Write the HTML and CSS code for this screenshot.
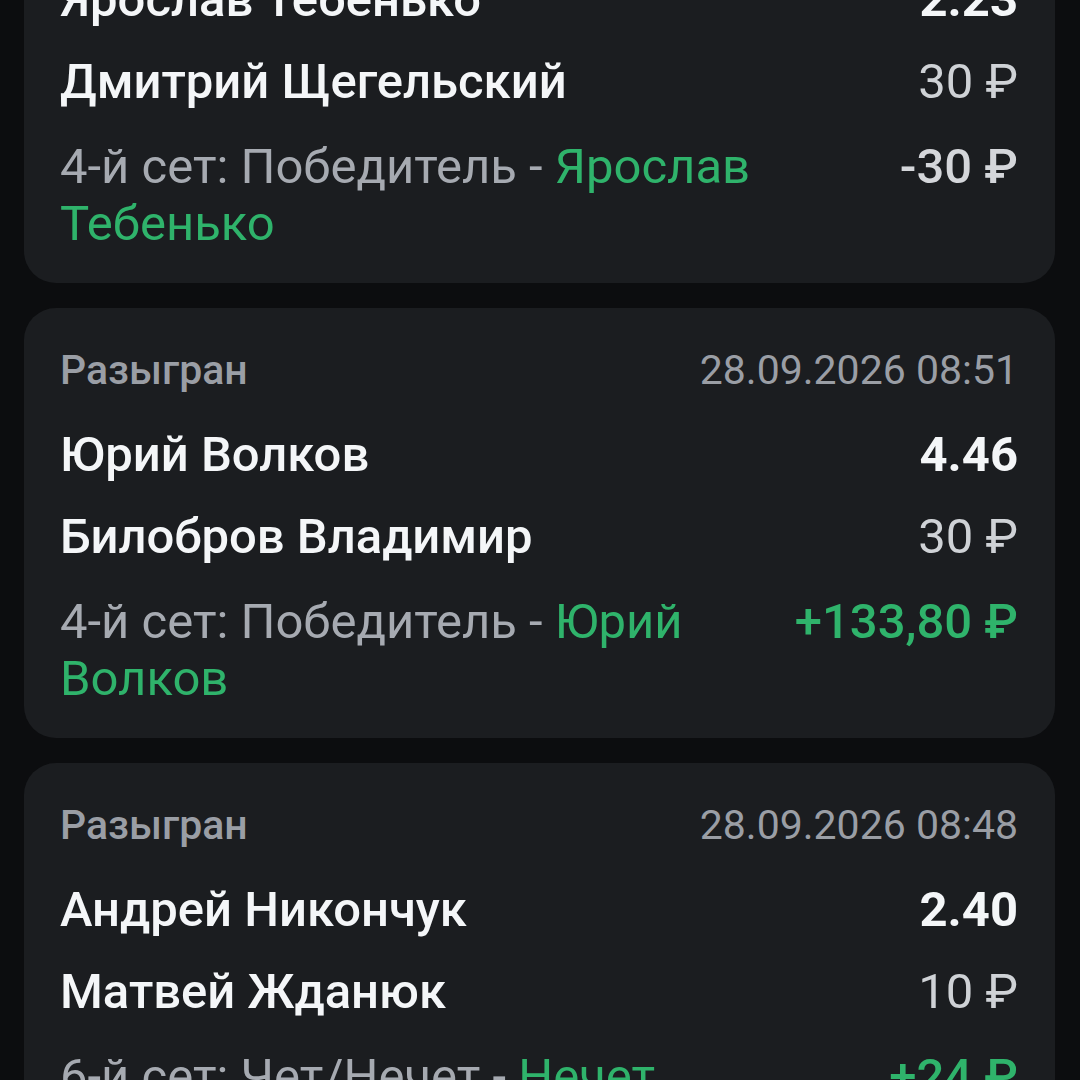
FILE: index.html
```html
<!DOCTYPE html>
<html lang="ru">
<head>
    <meta charset="UTF-8">
    <meta name="viewport" content="width=device-width, initial-scale=1.0">
    <title>История ставок</title>
    <link rel="stylesheet" href="styles.css">
</head>
<body>

<div class="feed">

    <!-- Bet card -->
    <div class="card">
        <div class="row head">
            <span class="status">Разыгран</span>
            <span class="date">28.09.2026 08:55</span>
        </div>
        <div class="row player">
            <span>Ярослав Тебенько</span>
            <span class="odds">2.23</span>
        </div>
        <div class="row player stake">
            <span>Дмитрий Щегельский</span>
            <span class="amount">30 ₽</span>
        </div>
        <div class="row bet">
            <span class="desc">4-й сет: Победитель - <span class="pick">Ярослав Тебенько</span></span>
            <span class="result">-30 ₽</span>
        </div>
    </div>

    <div class="card">
        <div class="row head">
            <span class="status">Разыгран</span>
            <span class="date">28.09.2026 08:51</span>
        </div>
        <div class="row player">
            <span>Юрий Волков</span>
            <span class="odds">4.46</span>
        </div>
        <div class="row player stake">
            <span>Билобров Владимир</span>
            <span class="amount">30 ₽</span>
        </div>
        <div class="row bet">
            <span class="desc">4-й сет: Победитель - <span class="pick">Юрий Волков</span></span>
            <span class="result win">+133,80 ₽</span>
        </div>
    </div>

    <div class="card">
        <div class="row head">
            <span class="status">Разыгран</span>
            <span class="date">28.09.2026 08:48</span>
        </div>
        <div class="row player">
            <span>Андрей Никончук</span>
            <span class="odds">2.40</span>
        </div>
        <div class="row player stake">
            <span>Матвей Жданюк</span>
            <span class="amount">10 ₽</span>
        </div>
        <div class="row bet">
            <span class="desc">6-й сет: Чет/Нечет - <span class="pick">Нечет</span></span>
            <span class="result win">+24 ₽</span>
        </div>
    </div>

</div>

</body>
</html>
```
FILE: styles.css
```css
body {
    font-family: Roboto, "Noto Sans", sans-serif;
    background-color: #0c0d0f;
    margin: 0;
    padding: 0;
    overflow: hidden;
}

.feed {
    display: flex;
    flex-direction: column;
    gap: 25px;
    padding: 0 25px 0 24px;
    margin-top: -147px;
}

.card {
    background-color: #1b1d20;
    border-radius: 32px;
    padding: 40px 37px 31px 36px;
}

.row {
    display: flex;
    justify-content: space-between;
    align-items: flex-start;
    gap: 40px;
}

.head {
    font-size: 41px;
    line-height: 44px;
    color: #9a9ea5;
}

.head .status {
    font-weight: 500;
}

.player {
    margin-top: 35px;
    font-size: 49px;
    line-height: 56px;
    font-weight: 500;
    color: #f4f6f8;
}

.player.stake {
    margin-top: 26px;
}

.stake .amount {
    font-weight: 400;
    color: #cfd2d6;
}

.odds {
    font-weight: 700;
}

.bet {
    margin-top: 28px;
    font-size: 49px;
    line-height: 57px;
}

.desc {
    color: #a6aab1;
    max-width: 700px;
}

.pick {
    color: #2fb36b;
}

.result {
    font-weight: 500;
    color: #d4d6da;
    white-space: nowrap;
}

.result.win {
    color: #2fb36b;
}
```
